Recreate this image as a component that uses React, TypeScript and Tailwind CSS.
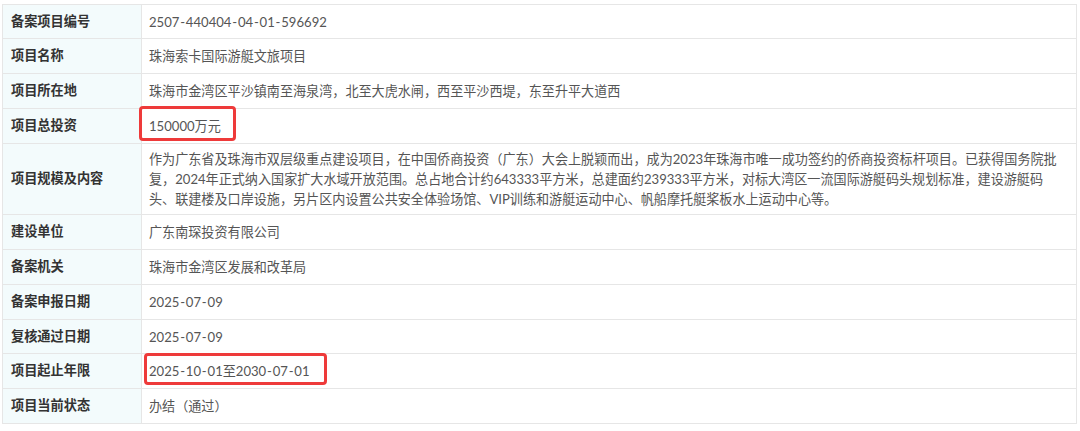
import React from "react";

type Row = { label: string; value: React.ReactNode; h: number; box?: "invest" | "range" };

function Dashed({ text }: { text: string }) {
  const parts = text.split("-");
  return (
    <>
      {parts.map((p, i) => (
        <React.Fragment key={i}>
          {i > 0 && <span className="mx-[0.8px]">-</span>}
          {p}
        </React.Fragment>
      ))}
    </>
  );
}

const rows: Row[] = [
  { label: "备案项目编号", value: <Dashed text="2507-440404-04-01-596692" />, h: 34 },
  { label: "项目名称", value: "珠海索卡国际游艇文旅项目", h: 35 },
  { label: "项目所在地", value: "珠海市金湾区平沙镇南至海泉湾，北至大虎水闸，西至平沙西堤，东至升平大道西", h: 35 },
  { label: "项目总投资", value: "150000万元", h: 35, box: "invest" },
  {
    label: "项目规模及内容",
    value: (
      <>
        作为广东省及珠海市双层级重点建设项目，在中国侨商投资（广东）大会上脱颖而出，成为2023年珠海市唯一成功签约的侨商投资标杆项目。已获得国务院批
        <br />
        复，2024年正式纳入国家扩大水域开放范围。总占地合计约643333平方米，总建面约239333平方米，对标大湾区一流国际游艇码头规划标准，建设游艇码
        <br />
        头、联建楼及口岸设施，另片区内设置公共安全体验场馆、VIP训练和游艇运动中心、帆船摩托艇桨板水上运动中心等。
      </>
    ),
    h: 71,
  },
  { label: "建设单位", value: "广东南琛投资有限公司", h: 35 },
  { label: "备案机关", value: "珠海市金湾区发展和改革局", h: 35 },
  { label: "备案申报日期", value: <Dashed text="2025-07-09" />, h: 35 },
  { label: "复核通过日期", value: <Dashed text="2025-07-09" />, h: 34 },
  { label: "项目起止年限", value: <Dashed text="2025-10-01至2030-07-01" />, h: 35, box: "range" },
  { label: "项目当前状态", value: "办结（通过）", h: 35 },
];

export default function App() {
  return (
    <div
      className="w-[1080px] h-[431px] bg-white overflow-hidden"
      style={{ fontFamily: '"Lato", "Noto Sans CJK SC", sans-serif' }}
    >
      <div className="ml-[2px] mt-[4px] w-[1075px] border-t border-l border-r border-[#e6e6e6]">
        {rows.map((r, i) => (
          <div
            key={i}
            className="flex border-b border-[#e6e6e6] box-border"
            style={{ height: r.h }}
          >
            <div className="w-[139px] shrink-0 bg-[#f3fbfc] border-r border-[#e6e6e6] flex items-center pl-[8px] text-[13.2px] font-bold text-[#333333]">
              {r.label}
            </div>
            <div className="relative flex-1 flex items-center pl-[7px] text-[13.1px] leading-[20px] text-[#555555]">
              <div>{r.value}</div>
              {r.box === "invest" && (
                <div className="absolute left-[-3px] top-[-3px] w-[97px] h-[35px] border-[3px] border-[#ee3a3a] rounded-[4px]" />
              )}
              {r.box === "range" && (
                <div className="absolute left-[2px] top-[-1px] w-[183px] h-[32px] border-[3px] border-[#ee3a3a] rounded-[4px]" />
              )}
            </div>
          </div>
        ))}
      </div>
    </div>
  );
}
